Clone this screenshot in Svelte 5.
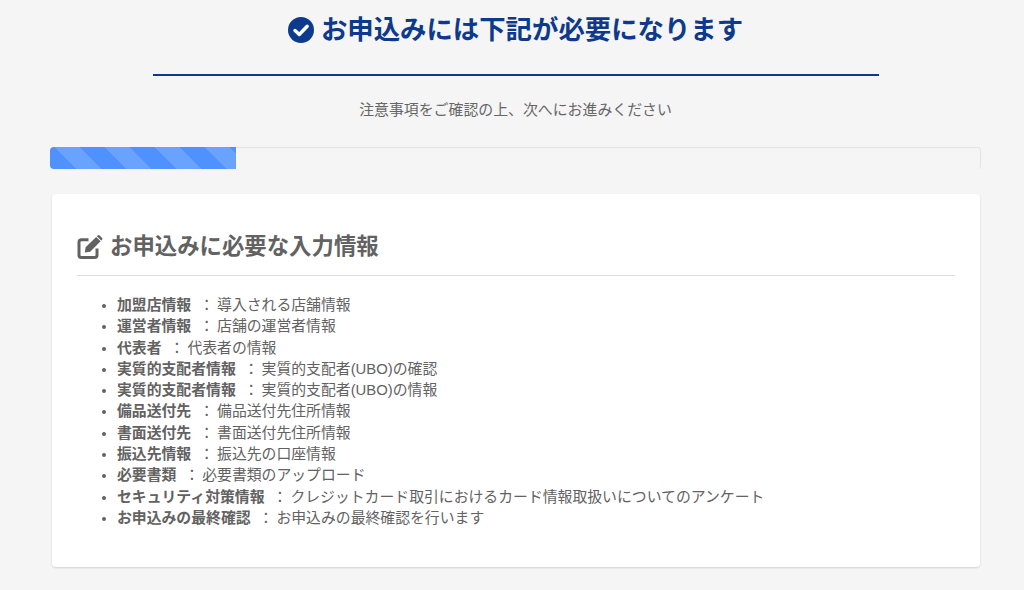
<script lang="ts">
  const items = [
    { name: '加盟店情報', desc: '導入される店舗情報' },
    { name: '運営者情報', desc: '店舗の運営者情報' },
    { name: '代表者', desc: '代表者の情報' },
    { name: '実質的支配者情報', desc: '実質的支配者(UBO)の確認' },
    { name: '実質的支配者情報', desc: '実質的支配者(UBO)の情報' },
    { name: '備品送付先', desc: '備品送付先住所情報' },
    { name: '書面送付先', desc: '書面送付先住所情報' },
    { name: '振込先情報', desc: '振込先の口座情報' },
    { name: '必要書類', desc: '必要書類のアップロード' },
    { name: 'セキュリティ対策情報', desc: 'クレジットカード取引におけるカード情報取扱いについてのアンケート' },
    { name: 'お申込みの最終確認', desc: 'お申込みの最終確認を行います' },
  ];
</script>

<main class="page">
  <header class="head">
    <h1 class="title">
      <svg class="check" viewBox="0 0 26 26" width="26" height="26">
        <circle cx="13" cy="13" r="13" fill="currentColor" />
        <polyline points="7,13.5 11.3,17.5 19.2,9.3" fill="none" stroke="#fff" stroke-width="3.4" stroke-linecap="round" stroke-linejoin="round" />
      </svg>
      お申込みには下記が必要になります
    </h1>
    <div class="rule"></div>
    <p class="sub">注意事項をご確認の上、次へにお進みください</p>
  </header>

  <div class="progress">
    <div class="bar" style="width: 20%"></div>
  </div>

  <section class="card">
    <h2 class="card-title">
      <svg viewBox="0 0 26 24" width="26" height="24">
        <path d="M11.5 4.7H4.2A2.2 2.2 0 0 0 2 6.9v13.4a2.2 2.2 0 0 0 2.2 2.2h13.6a2.2 2.2 0 0 0 2.2-2.2v-6.8" fill="none" stroke="currentColor" stroke-width="3" />
        <path d="M8.6 12.3 19.2 1.9l4.4 4.4L13.2 16.7l-5.4.8zM20.6.6a1.5 1.5 0 0 1 2.1 0l2.2 2.2a1.5 1.5 0 0 1 0 2.1l-.7.7-4.3-4.3z" fill="currentColor" />
      </svg>
      お申込みに必要な入力情報
    </h2>
    <ul class="list">
      {#each items as item}
        <li><strong>{item.name}</strong><span class="sep">：</span>{item.desc}</li>
      {/each}
    </ul>
  </section>
</main>

<style>
  :global(body) {
    margin: 0;
    background: #f5f5f5;
  }

  .page {
    height: 590px;
    overflow: hidden;
    padding: 0 43px 0 50px;
    box-sizing: border-box;
    font-family: "Liberation Sans", "Noto Sans CJK JP", sans-serif;
    color: #626262;
  }

  .head {
    text-align: center;
    padding-top: 12px;
  }

  .title {
    display: flex;
    align-items: center;
    justify-content: center;
    gap: 7px;
    margin: 0;
    font-size: 26.4px;
    line-height: 36px;
    font-weight: 700;
    color: #0d3a8c;
  }

  .rule {
    width: 726px;
    height: 2px;
    margin: 26px auto 0;
    background: #0d3a8c;
  }

  .sub {
    margin: 24px 0 0;
    font-size: 14.9px;
    line-height: 21px;
    color: #666;
  }

  .progress {
    height: 22px;
    margin-top: 26px;
    border-radius: 4px;
    border-top: 1px solid #e2e2e2;
    border-right: 1px solid #e2e2e2;
    box-sizing: border-box;
    background: #f5f5f5;
  }

  .bar {
    height: 22px;
    margin-top: -1px;
    border-radius: 4px 0 0 4px;
    background-color: #4f92ff;
    background-image: linear-gradient(45deg,
      rgba(255, 255, 255, 0.15) 25%, transparent 25%,
      transparent 50%, rgba(255, 255, 255, 0.15) 50%,
      rgba(255, 255, 255, 0.15) 75%, transparent 75%);
    background-size: 50px 50px;
    background-position: 5px 0;
  }

  .card {
    width: 928px;
    height: 373px;
    margin: 25px 0 0 2px;
    padding: 36px 25px 0;
    box-sizing: border-box;
    background: #fff;
    border-radius: 4px;
    box-shadow: 0 1px 2px rgba(0, 0, 0, 0.15);
  }

  .card-title {
    display: flex;
    align-items: center;
    gap: 7px;
    margin: 0;
    padding-bottom: 12px;
    border-bottom: 1px solid #ddd;
    font-size: 22.4px;
    line-height: 33px;
    font-weight: 700;
  }

  .list {
    margin: 19px 0 0;
    padding: 0 0 0 40px;
    font-size: 14.85px;
    line-height: 21.3px;
  }

  .list strong {
    font-weight: 700;
  }

  .sep {
    margin-left: 8px;
    margin-right: 3px;
  }
</style>
